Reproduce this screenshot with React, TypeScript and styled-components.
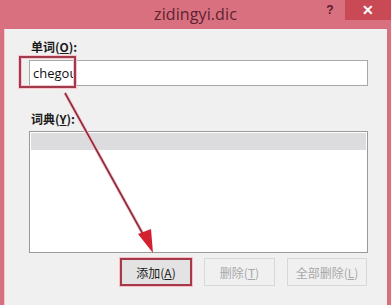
import React from "react";
import styled, { createGlobalStyle } from "styled-components";

const Global = createGlobalStyle`
  html, body { margin: 0; padding: 0; background: #db7281; }
  body { font-family: "Noto Sans CJK SC", "Noto Sans", sans-serif; }
`;

const Window = styled.div`
  position: relative;
  width: 391px;
  height: 305px;
  display: flex;
  flex-direction: column;
  background: #d9707f;
  overflow: hidden;
`;

const TitleBar = styled.div`
  height: 29px;
  position: relative;
  display: flex;
  align-items: flex-start;
  justify-content: flex-end;
`;

const Title = styled.div`
  position: absolute;
  left: 0;
  right: 0;
  top: 3px;
  text-align: center;
  font-family: "Open Sans", "Noto Sans", sans-serif;
  font-size: 16px;
  color: #5e2232;
  letter-spacing: 0.1px;
`;

const Help = styled.div`
  width: 30px;
  height: 20px;
  display: flex;
  align-items: center;
  justify-content: center;
  font-family: "Liberation Sans", sans-serif;
  font-weight: bold;
  font-size: 12px;
  color: #5a1a28;
  margin-right: 0px;
`;

const Close = styled.div`
  width: 46px;
  height: 20px;
  background: #c94a55;
  display: flex;
  align-items: center;
  justify-content: center;
  color: #fff;
  font-family: "Liberation Sans", sans-serif;
  font-weight: bold;
  font-size: 14px;
`;

const Client = styled.div`
  flex: 1;
  margin: 0 4px 0 5px;
  background: #f0f0f0;
  padding: 10px 19px 0 24px;
  display: flex;
  flex-direction: column;
  box-shadow: -1px 0 0 #f6c8cf;
`;

const Label = styled.div<{ $gap: number }>`
  font-size: 12px;
  line-height: 16px;
  font-weight: bold;
  color: #1a1a1a;
  margin-left: 2px;
  margin-top: ${(p) => p.$gap}px;
  u { text-decoration: underline; }
`;

const TextBox = styled.div`
  margin-top: 5px;
  height: 26px;
  box-sizing: border-box;
  border: 1px solid #a8a8a8;
  background: #fff;
  display: flex;
  align-items: center;
  padding-left: 3px;
  font-family: "Open Sans", "Noto Sans", sans-serif;
  font-size: 13px;
  color: #111;
`;

const ListBox = styled.div`
  margin-top: 4px;
  height: 122px;
  box-sizing: border-box;
  border: 1px solid #9a9a9a;
  background: #fff;
  padding: 1px;
`;

const ListRow = styled.div`
  height: 17px;
  background: #dcdcdf;
`;

const ButtonRow = styled.div`
  margin-top: 5px;
  display: flex;
  justify-content: flex-end;
  gap: 12px;
  padding-right: 1px;
`;

const Button = styled.div<{ $w: number; $disabled?: boolean; $marked?: boolean }>`
  width: ${(p) => p.$w}px;
  height: 28px;
  box-sizing: border-box;
  display: flex;
  align-items: center;
  justify-content: center;
  font-size: 12px;
  color: ${(p) => (p.$disabled ? "#a8a8a8" : "#1a1a1a")};
  background: ${(p) => (p.$disabled ? "#f0f0f0" : "#e3e3e3")};
  border: ${(p) =>
    p.$marked ? "2px solid #a83848" : p.$disabled ? "1px solid #d8d8d8" : "1px solid #adadad"};
  box-shadow: ${(p) => (p.$marked ? "0 0 0 1px #f3c0c8" : "none")};
  u { text-decoration: underline; }
`;

const Overlay = styled.svg`
  position: absolute;
  left: 0;
  top: 0;
  pointer-events: none;
`;

export default function App() {
  return (
    <>
      <Global />
      <Window>
        <TitleBar>
          <Title>zidingyi.dic</Title>
          <Help>?</Help>
          <Close>✕</Close>
        </TitleBar>
        <Client>
          <Label $gap={0}>
            单词(<u>O</u>):
          </Label>
          <TextBox>chegou</TextBox>
          <Label $gap={25}>
            词典(<u>Y</u>):
          </Label>
          <ListBox>
            <ListRow />
          </ListBox>
          <ButtonRow>
            <Button $w={72} $marked>
              添加(<u>A</u>)
            </Button>
            <Button $w={71} $disabled>
              删除(<u>T</u>)
            </Button>
            <Button $w={80} $disabled>
              全部删除(<u>L</u>)
            </Button>
          </ButtonRow>
        </Client>
        <Overlay width={391} height={305} viewBox="0 0 391 305">
          <rect x={20} y={57} width={55} height={30} fill="none" stroke="#f6c6ce" strokeWidth={4} />
          <rect x={20} y={57} width={55} height={30} fill="none" stroke="#a03a4c" strokeWidth={2} />
          <line x1={65} y1={93} x2={144} y2={236} stroke="#f7c4cc" strokeWidth={3.5} />
          <line x1={65} y1={93} x2={144} y2={236} stroke="#8a2a3a" strokeWidth={1.6} />
          <polygon points="153,253 138,234 151,229" fill="#d32030" />
        </Overlay>
      </Window>
    </>
  );
}
